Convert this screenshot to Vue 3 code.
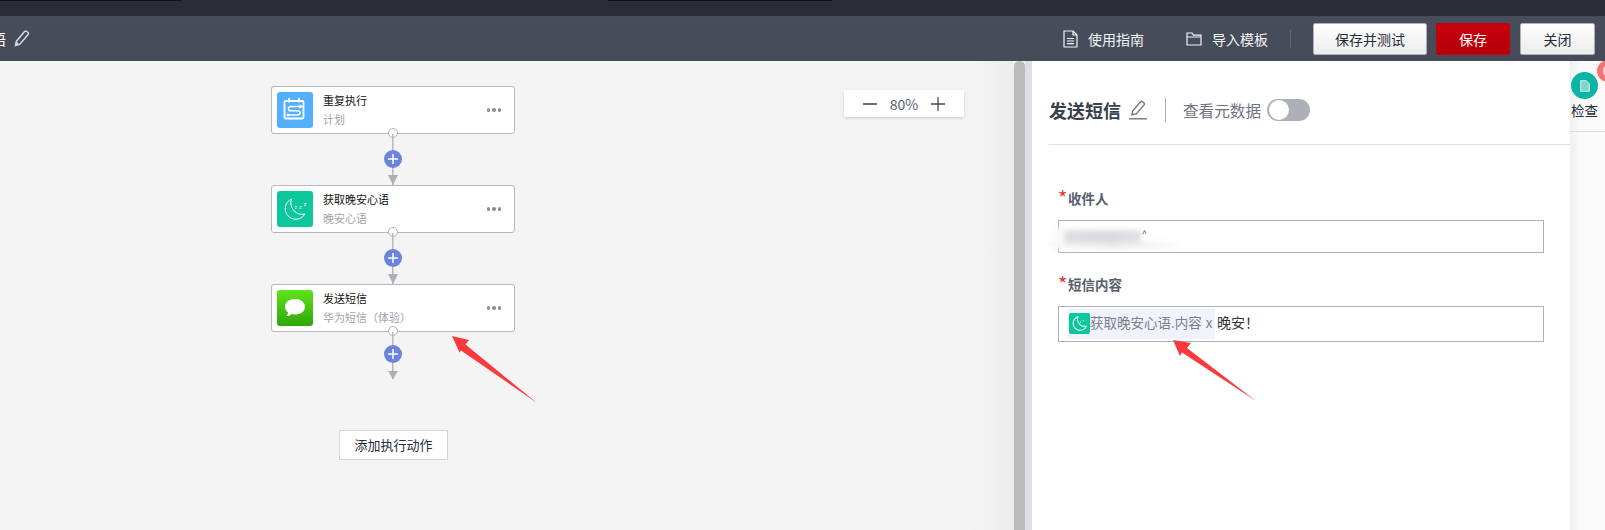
<template>
  <div class="page">
    <div class="topbar">
      <span class="topline first"></span>
      <span class="topline second"></span>
    </div>

    <header class="header">
      <span class="flow-name">语</span>
      <svg class="head-pencil" width="16" height="17" viewBox="0 0 16 17">
        <path d="M1.5 15.5 L2.3 11.4 L10.6 1.6 Q11.6 .6 12.8 1.5 L14 2.5 Q15 3.5 14.1 4.6 L5.6 14.4 Z" fill="none" stroke="#d5d8e0" stroke-width="1.5" />
        <path d="M1.5 15.5 L2.3 11.4 L5.6 14.4 Z" fill="#d5d8e0" />
      </svg>
      <div class="head-actions">
        <a class="head-link">
          <svg width="15" height="18" viewBox="0 0 15 18">
            <path d="M1 1 H10 L14 5 V17 H1 Z M10 1 V5 H14 M4 8.5 H11 M4 11 H11 M4 13.6 H11" fill="none" stroke="#f2f3f5" stroke-width="1.2" />
          </svg>
          使用指南
        </a>
        <a class="head-link">
          <svg width="16" height="14" viewBox="0 0 16 14">
            <path d="M1 1 H6 L7.5 3.2 H15 V13 H1 Z M1 5 H15" fill="none" stroke="#f2f3f5" stroke-width="1.2" />
          </svg>
          导入模板
        </a>
        <span class="head-divider"></span>
        <button class="btn test">保存并测试</button>
        <button class="btn save">保存</button>
        <button class="btn close">关闭</button>
      </div>
    </header>

    <main class="main">
      <section class="canvas">
        <div class="zoom-box">
          <svg width="14" height="14" viewBox="0 0 14 14"><path d="M0 7 H14" stroke="#40485a" stroke-width="1.6" /></svg>
          <span>80%</span>
          <svg width="14" height="14" viewBox="0 0 14 14"><path d="M0 7 H14 M7 0 V14" stroke="#40485a" stroke-width="1.3" /></svg>
        </div>

        <div class="flow">
          <template v-for="(node, i) in nodes" :key="node.title">
            <article class="card">
              <div class="card-icon" :class="node.kind">
                <svg v-if="node.kind === 'plan'" width="36" height="36" viewBox="0 0 36 36">
                  <rect x="7.5" y="9" width="19" height="17.5" rx="1.2" fill="none" stroke="#fff" stroke-width="1.8" />
                  <path d="M12 6 V10.5 M22 6 V10.5" stroke="#fff" stroke-width="1.8" />
                  <path d="M25 14.5 H14 Q11.5 14.5 11.5 16.7 Q11.5 18.8 14 18.8 H20.5 Q23 18.8 23 20.8 Q23 23 20.5 23 H11" fill="none" stroke="#fff" stroke-width="1.5" />
                  <circle cx="11" cy="23" r="1.5" fill="#fff" />
                  <path d="M22.5 12.6 L26 14.5 L22.5 16.4 Z" fill="#fff" />
                </svg>
                <svg v-else-if="node.kind === 'moon'" width="36" height="36" viewBox="0 0 36 36">
                  <path d="M14.5 8 A10.6 10.6 0 1 0 28 23 A11.5 11.5 0 0 1 14.5 8 Z" fill="none" stroke="#fff" stroke-width="1" />
                  <text x="17.5" y="18" class="zz small">z</text>
                  <text x="22" y="18" class="zz small">z</text>
                  <text x="26.5" y="15" class="zz">z</text>
                </svg>
                <svg v-else width="22" height="20" viewBox="0 0 24 22">
                  <path d="M12 1 C18.4 1 23 4.7 23 9.6 C23 14.5 18.4 18.2 12 18.2 C10.6 18.2 9.4 18 8.3 17.7 C6.6 19.5 4.5 20 2.2 19.9 C3.6 18.8 4.3 17.4 4.3 15.8 C2.2 14.2 1 12 1 9.6 C1 4.7 5.6 1 12 1 Z" fill="#fff" />
                </svg>
              </div>
              <div class="card-text">
                <div class="card-title">{{ node.title }}</div>
                <div class="card-sub">{{ node.sub }}</div>
              </div>
              <div class="card-more"><i></i><i></i><i></i></div>
              <span class="port"></span>
            </article>
            <div class="connector" :class="{ last: i === nodes.length - 1 }">
              <span class="plus">
                <svg width="10" height="10" viewBox="0 0 10 10"><path d="M0 5 H10 M5 0 V10" stroke="#fff" stroke-width="1.5" /></svg>
              </span>
              <span class="tip"></span>
            </div>
          </template>
          <button class="add-btn">添加执行动作</button>
        </div>
      </section>

      <div class="scroll-thumb"></div>
      <div class="scroll-track"></div>

      <section class="panel">
        <div class="panel-head">
          <h2>发送短信</h2>
          <svg class="panel-pencil" width="18" height="20" viewBox="0 0 18 20">
            <path d="M3 14.8 L3.8 10.8 L11.6 1.8 Q12.6 .9 13.6 1.7 L15 2.9 Q16 3.9 15.1 4.9 L7.2 13.9 Z" fill="none" stroke="#6f7480" stroke-width="1.4" />
            <path d="M0 18.8 H18" stroke="#6f7480" stroke-width="1.4" />
          </svg>
          <span class="panel-divider"></span>
          <span class="meta">查看元数据</span>
          <span class="toggle"><i></i></span>
        </div>
        <div class="form">
          <label class="label"><b>*</b>收件人</label>
          <div class="input first-input"><span class="smudge"></span><span class="caret">^</span></div>
          <label class="label next"><b>*</b>短信内容</label>
          <div class="input content-input">
            <span class="chip">
              <span class="chip-icon">
                <svg width="17" height="17" viewBox="0 0 32 32">
                  <path d="M13 3.5 A13 13 0 1 0 29 21 A13.5 13.5 0 0 1 13 3.5 Z" fill="none" stroke="#e8fff8" stroke-width="2" />
                  <circle cx="18" cy="13" r="1.3" fill="#e8fff8" />
                  <circle cx="23" cy="11" r="1.3" fill="#e8fff8" />
                </svg>
              </span>
              <span class="chip-text">获取晚安心语.内容</span>
              <em>x</em>
            </span>
            <span class="plain">晚安！</span>
          </div>
        </div>
      </section>

      <aside class="strip">
        <span class="badge">0</span>
        <span class="strip-icon">
          <svg width="10" height="12" viewBox="0 0 10 12">
            <path d="M.7 .7 H6.3 L9.3 3.7 V11.3 H.7 Z" fill="#7fd6ca" stroke="#dff7f3" stroke-width=".9" />
          </svg>
        </span>
        <span class="strip-text">检查</span>
        <span class="strip-line"></span>
      </aside>

      <svg class="arrows" width="1605" height="469" viewBox="0 61 1605 469">
        <path d="M452 336 L469 340 L465.5 344.5 L537 403 L461 350.5 L459.5 352.5 Z" fill="#fb3b3b" />
        <path d="M1173 340 L1191 343 L1187 348 L1256 401 L1182 352.5 L1180 356 Z" fill="#fb3b3b" />
      </svg>
    </main>
  </div>
</template>

<script setup>
const nodes = [
  { kind: 'plan', title: '重复执行', sub: '计划' },
  { kind: 'moon', title: '获取晚安心语', sub: '晚安心语' },
  { kind: 'msg', title: '发送短信', sub: '华为短信（体验）' }
]
</script>

<style>
html, body { margin: 0; background: #f4f4f4; overflow: hidden; }
</style>

<style scoped>
.page {
  width: 1605px;
  height: 530px;
  overflow: hidden;
  display: flex;
  flex-direction: column;
  font-family: "Noto Sans CJK SC", "Noto Sans", sans-serif;
  color: #252b3a;
}
.topbar { height: 16px; flex: none; background: #2a2d36; display: flex; align-items: flex-start; }
.topline { height: 1px; background: #121317; display: block; }
.topline.first { width: 181px; }
.topline.second { width: 224px; margin-left: 427px; }

.header {
  height: 45px;
  flex: none;
  display: flex;
  align-items: center;
  background: linear-gradient(#474d5b, #454b59);
  color: #fff;
  position: relative;
  z-index: 3;
}
.flow-name { font-size: 15px; margin-left: -9px; line-height: 20px; width: 15px; flex: none; }
.head-pencil { margin-left: 8px; flex: none; }
.head-actions { margin-left: auto; display: flex; align-items: center; padding-right: 10px; }
.head-link { display: flex; align-items: center; gap: 10px; font-size: 14px; color: #f2f3f5; margin-right: 42px; }
.head-link + .head-link { margin-right: 22px; }
.head-divider { width: 1px; height: 18px; background: #5f6573; margin-right: 22px; }
.btn {
  height: 32px;
  box-sizing: border-box;
  border: 1px solid #adb0b8;
  border-radius: 2px;
  background: linear-gradient(#fff, #ececec);
  color: #252b3a;
  font: 14px "Noto Sans CJK SC", sans-serif;
  padding: 0;
  margin-left: 10px;
}
.btn.test { width: 114px; margin-left: 0; }
.btn.save { width: 74px; margin-left: 9px; background: linear-gradient(#c7000b, #b5000a); border-color: #c7000b; color: #fff; }
.btn.close { width: 75px; }

.main { flex: 1; display: flex; position: relative; min-height: 0; }
.canvas {
  width: 1014px;
  flex: none;
  position: relative;
  background: linear-gradient(90deg, #f4f4f4 970px, #ededed 1014px);
}
.flow { width: 244px; margin-left: 271px; padding-top: 25px; display: flex; flex-direction: column; }
.card {
  height: 48px;
  box-sizing: border-box;
  background: #fff;
  border: 1px solid #b6b7bc;
  border-radius: 3px;
  display: flex;
  align-items: center;
  padding-left: 5px;
  position: relative;
}
.card-icon {
  width: 36px;
  height: 36px;
  border-radius: 3px;
  display: flex;
  align-items: center;
  justify-content: center;
  flex: none;
}
.card-icon.plan { background: #52b0ff; }
.card-icon.moon { background: #0bc79b; }
.card-icon.msg { background: linear-gradient(#5fe31a, #2fa60b); }
.zz { font: 6px "Liberation Sans", sans-serif; fill: #fff; }
.zz.small { font-size: 5px; }
.card-text { margin-left: 10px; flex: 1; padding-bottom: 2px; }
.card-title { font-size: 11px; line-height: 16px; color: #111; }
.card-sub { font-size: 11px; line-height: 16px; margin-top: 3px; color: #a0a3aa; }
.card-more { display: flex; gap: 2px; margin-right: 13px; }
.card-more i { width: 3.5px; height: 3.5px; border-radius: 50%; background: #8a8e99; display: block; }
.port {
  position: absolute;
  left: 116px;
  bottom: -5px;
  width: 8px;
  height: 8px;
  border: 1px solid #adb0b8;
  border-radius: 50%;
  background: #fff;
}
.connector {
  height: 51px;
  width: 10px;
  margin-left: 117px;
  display: flex;
  flex-direction: column;
  align-items: center;
  justify-content: flex-end;
  position: relative;
  background: linear-gradient(#b8b9c0, #b8b9c0) center / 1.5px 100% no-repeat;
}
.plus {
  width: 18px;
  height: 18px;
  border-radius: 50%;
  background: #6a83dc;
  display: flex;
  align-items: center;
  justify-content: center;
  flex: none;
  margin-bottom: 7px;
}
.tip {
  width: 0;
  height: 0;
  border-left: 5.5px solid transparent;
  border-right: 5.5px solid transparent;
  border-top: 10px solid #adb0b8;
  flex: none;
}
.connector.last { height: 47px; }
.connector.last .plus { margin-bottom: 8px; }
.connector.last .tip { border-top-width: 8px; }
.add-btn {
  width: 109px;
  height: 30px;
  box-sizing: border-box;
  margin: 51px 0 0 68px;
  padding: 0 0 2px;
  border: 1px solid #d5d5d8;
  background: #fff;
  color: #252b3a;
  font: 13px "Noto Sans CJK SC", sans-serif;
}
.zoom-box {
  position: absolute;
  left: 844px;
  top: 29px;
  width: 120px;
  height: 27px;
  background: #fff;
  box-shadow: 0 1px 3px rgba(60, 60, 80, .22);
  border-radius: 1px;
  display: flex;
  align-items: center;
  justify-content: center;
  gap: 13px;
  font-size: 14px;
  color: #575d6c;
}
.scroll-thumb { width: 11px; flex: none; background: #bcbcbc; border-radius: 5px 5px 0 0; }
.scroll-track { width: 7px; flex: none; background: #dedee3; }
.panel { width: 538px; flex: none; background: #fff; }
.panel-head {
  height: 84px;
  box-sizing: border-box;
  margin-left: 17px;
  padding-top: 15px;
  border-bottom: 1px solid #dfe1e6;
  display: flex;
  align-items: center;
}
.panel-head h2 { margin: 0; font-size: 18px; font-weight: 700; color: #3b404d; line-height: 26px; }
.panel-pencil { margin-left: 8px; }
.panel-divider { width: 1px; height: 24px; background: #adb0b8; margin: 0 17px 0 18px; }
.meta { font-size: 15.6px; color: #6f7480; }
.toggle { width: 43px; height: 22px; border-radius: 11px; background: #adb0b8; margin-left: 6px; padding: 1px 2px; box-sizing: border-box; display: block; }
.toggle i { width: 20px; height: 20px; border-radius: 50%; background: #fff; display: block; }
.form { padding: 43px 0 0 26px; }
.label { display: flex; align-items: center; height: 20px; line-height: 20px; font-size: 13.5px; font-weight: 700; color: #575d6c; margin-bottom: 12px; }
.label b { color: #e5333f; font-weight: 400; font-size: 20px; width: 10px; line-height: 20px; height: 20px; flex: none; }
.label.next { margin-top: 21px; }
.input {
  width: 486px;
  box-sizing: border-box;
  border: 1px solid #adb0b8;
  background: #fff;
  position: relative;
  display: flex;
  align-items: center;
}
.first-input { height: 33px; }
.content-input { height: 36px; padding-left: 8px; }
.smudge {
  position: absolute;
  left: -9px;
  top: 7px;
  width: 128px;
  height: 22px;
  background:
    linear-gradient(90deg, #dfe0e4, #dadbdf 60%, #e2e3e6) 15px 2px / 76px 13px no-repeat,
    linear-gradient(90deg, #f8f8f8, #ececee 50%, #fcfcfc) 0 13px / 128px 8px no-repeat,
    linear-gradient(90deg, #fff, #f5f5f5) 0 0 / 16px 22px no-repeat;
  filter: blur(2px);
}
.caret { position: absolute; left: 83px; top: 7px; font-size: 9px; line-height: 12px; color: #555; }
.chip {
  height: 31px;
  width: 148px;
  background: #f0f3fc;
  display: flex;
  align-items: center;
  padding-left: 2px;
  box-sizing: border-box;
  font-size: 13.5px;
  color: #7b7f8a;
  white-space: nowrap;
  flex: none;
  margin-bottom: 2px;
}
.chip-text { display: block; padding-bottom: 2px; }
.chip em { font-style: normal; color: #7b7f8a; margin-left: 4px; padding-bottom: 2px; }
.chip-icon {
  width: 21px;
  height: 21px;
  background: #0bc79b;
  border-radius: 2px;
  display: flex;
  align-items: center;
  justify-content: center;
  flex: none;
}
.plain { font-size: 14px; color: #333; margin-left: 2px; padding-bottom: 5px; }
.strip { flex: 1; position: relative; background: linear-gradient(90deg, #efefef, #fafafa 30%); }
.strip-icon {
  position: absolute;
  left: 1px;
  top: 11px;
  width: 27px;
  height: 27px;
  border-radius: 50%;
  background: #0ab5a4;
  display: flex;
  align-items: center;
  justify-content: center;
}
.strip-text { position: absolute; left: 1px; top: 38px; font-size: 13.5px; line-height: 22px; color: #252b3a; white-space: nowrap; }
.strip-line { position: absolute; left: 0; right: 0; top: 70px; height: 1px; background: #dcdde0; }
.badge {
  position: absolute;
  left: 27px;
  top: -1px;
  width: 22px;
  height: 22px;
  box-sizing: border-box;
  padding-left: 6px;
  border-radius: 50%;
  background: #f7756f;
  color: #fff;
  font-size: 13px;
  line-height: 22px;
  z-index: 1;
}
.arrows { position: absolute; left: 0; top: 0; pointer-events: none; }
</style>
